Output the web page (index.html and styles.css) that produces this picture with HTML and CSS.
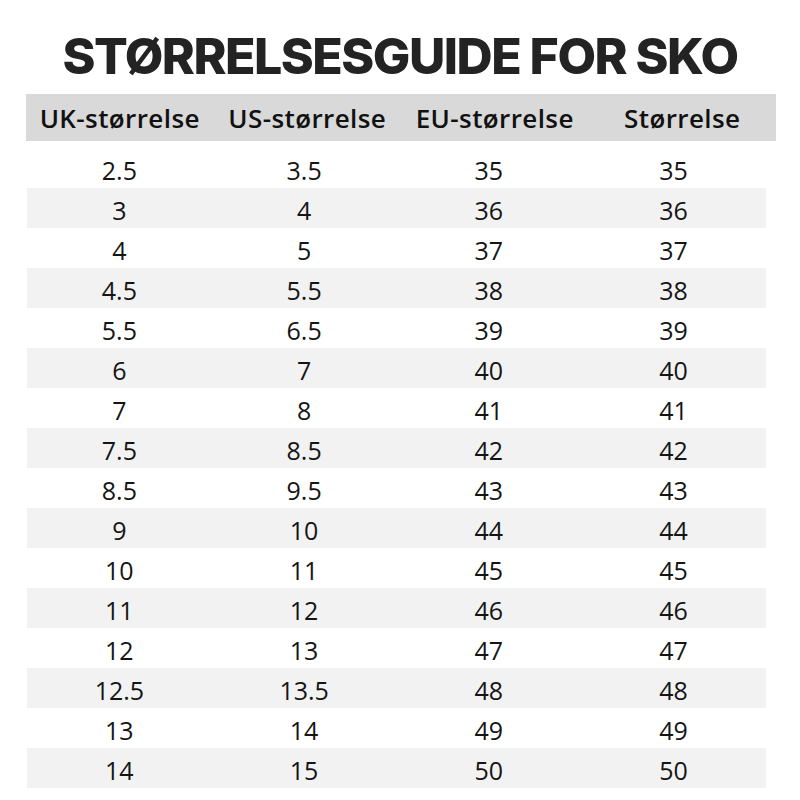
FILE: index.html
```html
<!DOCTYPE html>
<html lang="no">
<head>
<meta charset="utf-8">
<title>Størrelsesguide for sko</title>
<link rel="stylesheet" href="styles.css">
</head>
<body>
<main class="page">
  <h1 class="title">STØRRELSESGUIDE FOR SKO</h1>
  <div class="head">
    <div>UK-størrelse</div><div>US-størrelse</div><div>EU-størrelse</div><div>Størrelse</div>
  </div>
  <div class="rows">
    <div class="row"><div>2.5</div><div>3.5</div><div>35</div><div>35</div></div>
    <div class="row"><div>3</div><div>4</div><div>36</div><div>36</div></div>
    <div class="row"><div>4</div><div>5</div><div>37</div><div>37</div></div>
    <div class="row"><div>4.5</div><div>5.5</div><div>38</div><div>38</div></div>
    <div class="row"><div>5.5</div><div>6.5</div><div>39</div><div>39</div></div>
    <div class="row"><div>6</div><div>7</div><div>40</div><div>40</div></div>
    <div class="row"><div>7</div><div>8</div><div>41</div><div>41</div></div>
    <div class="row"><div>7.5</div><div>8.5</div><div>42</div><div>42</div></div>
    <div class="row"><div>8.5</div><div>9.5</div><div>43</div><div>43</div></div>
    <div class="row"><div>9</div><div>10</div><div>44</div><div>44</div></div>
    <div class="row"><div>10</div><div>11</div><div>45</div><div>45</div></div>
    <div class="row"><div>11</div><div>12</div><div>46</div><div>46</div></div>
    <div class="row"><div>12</div><div>13</div><div>47</div><div>47</div></div>
    <div class="row"><div>12.5</div><div>13.5</div><div>48</div><div>48</div></div>
    <div class="row"><div>13</div><div>14</div><div>49</div><div>49</div></div>
    <div class="row"><div>14</div><div>15</div><div>50</div><div>50</div></div>
  </div>
</main>
</body>
</html>
```

FILE: styles.css
```css
html, body {
  margin: 0;
  padding: 0;
  background: #ffffff;
}
.page {
  width: 800px;
  height: 800px;
  overflow: hidden;
}
.title {
  margin: 0;
  padding-top: 24px;
  height: 70px;
  box-sizing: border-box;
  text-align: center;
  font-family: "Inter", "DejaVu Sans", sans-serif;
  font-weight: 800;
  font-size: 50px;
  line-height: 64px;
  letter-spacing: -1.5px;
  color: #232323;
}
.head {
  margin: 24px 0 0 26px;
  width: 750px;
  height: 47px;
  background: #d9d9d9;
  display: grid;
  grid-template-columns: repeat(4, 1fr);
  align-items: center;
  font-family: "Open Sans", sans-serif;
  font-weight: 600;
  font-size: 26px;
  letter-spacing: 0.4px;
  color: #111111;
  text-align: center;
}
.rows {
  margin: 7px 0 0 27px;
  width: 739px;
  font-family: "Open Sans", sans-serif;
  font-size: 25px;
  color: #151515;
}
.row {
  display: grid;
  grid-template-columns: repeat(4, 1fr);
  height: 40px;
  align-items: center;
  text-align: center;
  padding-top: 4px;
  box-sizing: border-box;
}
.row:nth-child(even) {
  background: #f2f2f2;
}
```
